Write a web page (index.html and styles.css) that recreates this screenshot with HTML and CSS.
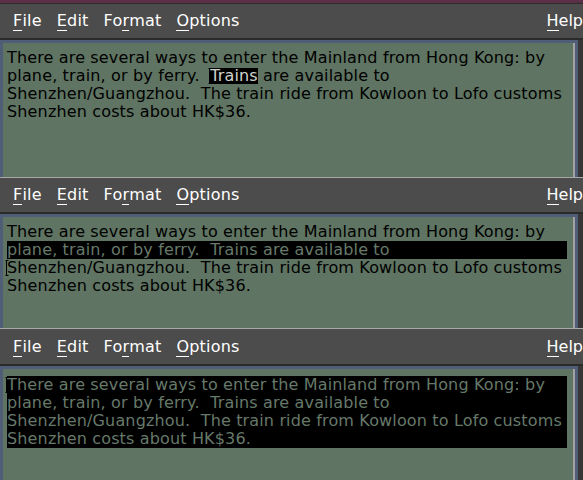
FILE: index.html
```html
<!DOCTYPE html>
<html>
<head>
<meta charset="utf-8">
<link rel="stylesheet" href="styles.css">
</head>
<body>
<div class="stack">
  <section class="win first">
    <div class="menubar">
      <span class="item"><span class="mn">F</span>ile</span>
      <span class="item"><span class="mn">E</span>dit</span>
      <span class="item">Fo<span class="mn">r</span>mat</span>
      <span class="item"><span class="mn">O</span>ptions</span>
      <span class="item help"><span class="mn">H</span>elp</span>
    </div>
    <div class="gap"></div>
    <div class="frame">
      <div class="text">
        <div class="line">There are several ways to enter the Mainland from Hong Kong: by</div>
        <div class="line">plane, train, or by ferry.  <span class="caret"><svg width="5" height="16" viewBox="0 0 5 16"><path d="M0.5 0.5H3.5M1.5 0.5V15.5M0.5 15.5H3.5" stroke="#000" fill="none"/></svg></span><span class="hl">Trains</span> are available to</div>
        <div class="line">Shenzhen/Guangzhou.  The train ride from Kowloon to Lofo customs</div>
        <div class="line">Shenzhen costs about HK$36.</div>
      </div>
    </div>
  </section>

  <section class="win">
    <div class="menubar">
      <span class="item"><span class="mn">F</span>ile</span>
      <span class="item"><span class="mn">E</span>dit</span>
      <span class="item">Fo<span class="mn">r</span>mat</span>
      <span class="item"><span class="mn">O</span>ptions</span>
      <span class="item help"><span class="mn">H</span>elp</span>
    </div>
    <div class="gap"></div>
    <div class="frame">
      <div class="text">
        <div class="line">There are several ways to enter the Mainland from Hong Kong: by</div>
        <div class="line sel">plane, train, or by ferry.  Trains are available to</div>
        <div class="line"><span class="caret"><svg width="5" height="16" viewBox="0 0 5 16"><path d="M0.5 0.5H3.5M1.5 0.5V15.5M0.5 15.5H3.5" stroke="#000" fill="none"/></svg></span>Shenzhen/Guangzhou.  The train ride from Kowloon to Lofo customs</div>
        <div class="line">Shenzhen costs about HK$36.</div>
      </div>
    </div>
  </section>

  <section class="win last">
    <div class="menubar">
      <span class="item"><span class="mn">F</span>ile</span>
      <span class="item"><span class="mn">E</span>dit</span>
      <span class="item">Fo<span class="mn">r</span>mat</span>
      <span class="item"><span class="mn">O</span>ptions</span>
      <span class="item help"><span class="mn">H</span>elp</span>
    </div>
    <div class="gap"></div>
    <div class="frame">
      <div class="text">
        <div class="block sel">
          <div class="line"><span class="caret"><svg width="5" height="16" viewBox="0 0 5 16"><path d="M0.5 0.5H3.5M1.5 0.5V15.5M0.5 15.5H3.5" stroke="#000" fill="none"/></svg></span>There are several ways to enter the Mainland from Hong Kong: by</div>
          <div class="line">plane, train, or by ferry.  Trains are available to</div>
          <div class="line">Shenzhen/Guangzhou.  The train ride from Kowloon to Lofo customs</div>
          <div class="line">Shenzhen costs about HK$36.</div>
        </div>
      </div>
    </div>
  </section>
</div>
</body>
</html>
```

FILE: styles.css
```css
html, body {
  margin: 0;
  padding: 0;
  width: 583px;
  height: 480px;
  overflow: hidden;
  background: #363636;
}

.stack {
  display: flex;
  flex-direction: column;
  height: 480px;
  font-family: "DejaVu Sans", "Liberation Sans", sans-serif;
  font-size: 16px;
  letter-spacing: 0.15px;
}

.win {
  display: flex;
  flex-direction: column;
  background: #363636;
  border-top: 1px solid #a9a9a9;
  overflow: hidden;
}

.win.first {
  border-top: 3px solid #5b2f47;
}

.win.first .menubar {
  border-top: 1px solid #2c2c2c;
}

.menubar {
  display: flex;
  align-items: center;
  height: 34px;
  padding-left: 13px;
  gap: 15px;
  background: #4c4c4c;
  color: #ffffff;
  line-height: 34px;
  white-space: nowrap;
  letter-spacing: 0.2px;
}

.win.last .menubar {
  height: 35px;
  line-height: 35px;
}

.item.help {
  margin-left: auto;
  margin-right: 0;
  letter-spacing: 0;
}

.mn {
  border-bottom: 1px solid #ffffff;
  line-height: 19px;
  display: inline-block;
}

.gap {
  height: 2px;
  background: #2a2a2a;
}

.frame {
  margin-right: 5px;
  border-top: 3px solid #4f5d76;
  border-left: 3px solid #4f5d76;
  border-right: 3px solid #4f5d76;
}

.text {
  background: #5f7462;
  border-right: 2px solid #a2a2a2;
  padding: 6px 6px 0 4px;
  color: #000;
  line-height: 18px;
}

.win.first .text {
  height: 128px;
}

.win:nth-child(2) .text {
  height: 105px;
}

.win.last {
  flex: 1;
}

.win.last .frame {
  flex: 1;
  display: flex;
  flex-direction: column;
}

.win.last .text {
  flex: 1;
  padding-top: 7px;
}

.line {
  white-space: pre;
  height: 18px;
}

.sel {
  background: #000;
  color: #66796a;
}

.hl {
  display: inline-block;
  line-height: 16px;
  background: #000;
  color: #cfd3cf;
}

.caret {
  position: relative;
  display: inline-block;
  width: 0;
  height: 16px;
  vertical-align: -3px;
}

.caret svg {
  position: absolute;
  left: -2px;
  top: 0;
}
```
